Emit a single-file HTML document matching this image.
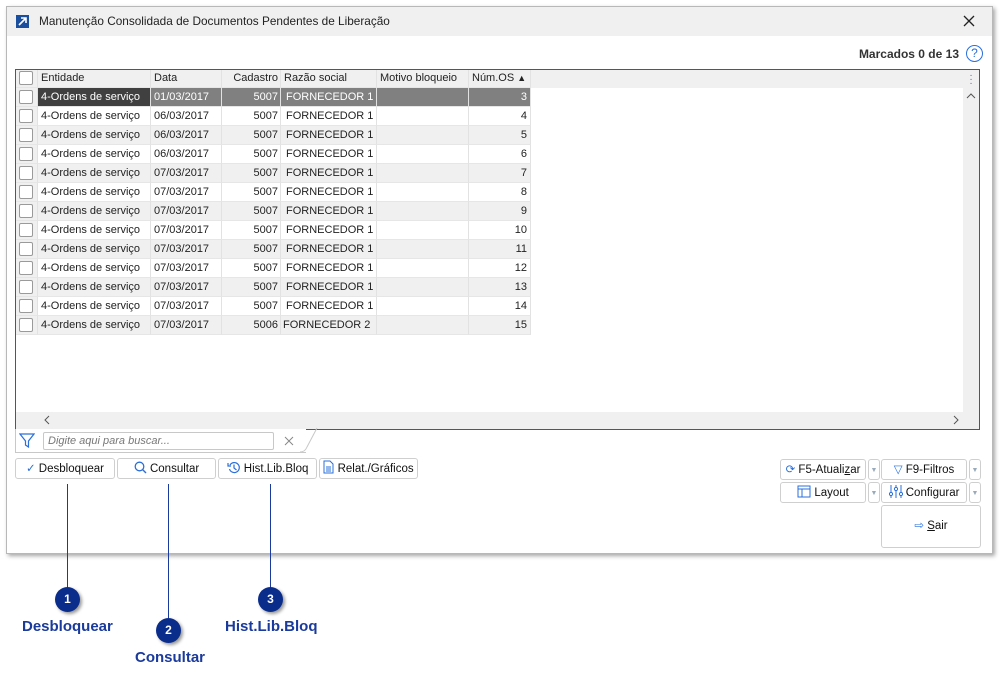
<!DOCTYPE html>
<html><head><meta charset="utf-8"><style>
*{box-sizing:border-box;margin:0;padding:0}
body{width:1001px;height:685px;background:#fff;font-family:"Liberation Sans",sans-serif;font-size:11px;color:#222;position:relative;overflow:hidden}
.abs{position:absolute}
.win{left:6px;top:6px;width:987px;height:548px;border:1px solid #b8b8b8;background:#fff;box-shadow:2px 2px 4px rgba(0,0,0,.35)}
.title{left:0;top:0;width:985px;height:29px;background:#f0f0f0}
.grid{left:8px;top:62px;width:965px;height:361px;border:1px solid #2a5ca8;background:#fff}
.row{position:absolute;left:0;height:19px;width:516px}
.c{position:absolute;top:0;height:19px;line-height:19px;white-space:nowrap;overflow:hidden;border-right:1px solid #e2e2e2;border-bottom:1px solid #e6e6e6;padding:0 3px}
.cb{position:absolute;left:3px;top:2px;width:14px;height:14px;border:1px solid #9a9a9a;background:#fff;border-radius:2px}
.btn{position:absolute;height:21px;border:1px solid #cfcfcf;border-radius:3px;background:#fff;font-size:11.5px;line-height:20px;text-align:center;color:#111}
.dd{position:absolute;width:12px;height:21px;border:1px solid #cfcfcf;border-radius:3px;background:#fff;color:#9ab;font-size:7px;text-align:center;line-height:21px}
.bub{position:absolute;width:25px;height:25px;border-radius:50%;background:#0a2d8c;color:#fff;font-weight:bold;font-size:12px;text-align:center;line-height:25px;box-shadow:2px 2px 3px rgba(0,0,0,.4)}
.lbl{position:absolute;color:#1a3a9c;font-weight:bold;font-size:15px;font-family:"Liberation Sans",sans-serif}
.vl{position:absolute;width:1px;background:#1a3a9c}
.g{background:#f0f0f0}.s{background:#808080}
.r{text-align:right}
</style></head><body>
<div class="abs win">
 <div class="abs title">
  <div class="abs" style="left:9px;top:8px;width:13px;height:13px;background:#1a4fa0"><svg width="13" height="13"><path d="M3 10L10 3M5 3h5v5" stroke="#fff" stroke-width="1.6" fill="none"/></svg></div>
  <div class="abs" style="left:32px;top:7px;font-size:11.8px;color:#222">Manutenção Consolidada de Documentos Pendentes de Liberação</div>
  <svg class="abs" style="left:956px;top:8px" width="12" height="12"><path d="M1 1L11 11M11 1L1 11" stroke="#222" stroke-width="1.3"/></svg>
 </div>
 <div class="abs" style="right:33px;top:40px;font-weight:bold;font-size:12px;color:#333">Marcados 0 de 13</div>
 <div class="abs" style="left:959px;top:38px;width:17px;height:17px;border:1.5px solid #2a6fdb;border-radius:50%;color:#2a6fdb;font-size:12px;text-align:center;line-height:14px">?</div>
 <div class="abs grid">
  <div class="abs" style="left:0;top:0;width:947px;height:18px;background:#f0f0f0"></div>
  <div class="abs" style="left:0;top:0;width:963px;height:342px">
   <div class="row" style="top:0;height:18px">
    <div class="c" style="left:0;width:22px;height:18px;background:#f0f0f0"><div class="cb" style="top:1px"></div></div>
    <div class="c" style="left:22px;width:113px;line-height:17px;height:18px">Entidade</div>
    <div class="c" style="left:135px;width:71px;line-height:17px;height:18px">Data</div>
    <div class="c" style="left:206px;width:59px;line-height:17px;height:18px;text-align:right;padding-right:2px">Cadastro</div>
    <div class="c" style="left:265px;width:96px;line-height:17px;height:18px">Razão social</div>
    <div class="c" style="left:361px;width:92px;line-height:17px;height:18px">Motivo bloqueio</div>
    <div class="c" style="left:453px;width:62px;line-height:17px;height:18px">Núm.OS <span style="font-size:9px">&#9650;</span></div>
   </div>
   <div class="row" style="top:18px;color:#fff"><div class="c g" style="left:0;width:22px"><div class="cb"></div></div><div class="c" style="left:22px;width:113px;background:#404040">4-Ordens de serviço</div><div class="c s" style="left:135px;width:71px">01/03/2017</div><div class="c s r" style="left:206px;width:59px;padding-right:2px">5007</div><div class="c s" style="left:265px;width:96px;padding-left:5px">FORNECEDOR 1</div><div class="c s" style="left:361px;width:92px"></div><div class="c s r" style="left:453px;width:62px">3</div></div>
   <div class="row" style="top:37px"><div class="c g" style="left:0;width:22px"><div class="cb"></div></div><div class="c" style="left:22px;width:113px">4-Ordens de serviço</div><div class="c" style="left:135px;width:71px">06/03/2017</div><div class="c r" style="left:206px;width:59px;padding-right:2px">5007</div><div class="c" style="left:265px;width:96px;padding-left:5px">FORNECEDOR 1</div><div class="c" style="left:361px;width:92px"></div><div class="c r" style="left:453px;width:62px">4</div></div>
   <div class="row" style="top:56px"><div class="c g" style="left:0;width:22px"><div class="cb"></div></div><div class="c g" style="left:22px;width:113px">4-Ordens de serviço</div><div class="c g" style="left:135px;width:71px">06/03/2017</div><div class="c g r" style="left:206px;width:59px;padding-right:2px">5007</div><div class="c g" style="left:265px;width:96px;padding-left:5px">FORNECEDOR 1</div><div class="c g" style="left:361px;width:92px"></div><div class="c g r" style="left:453px;width:62px">5</div></div>
   <div class="row" style="top:75px"><div class="c g" style="left:0;width:22px"><div class="cb"></div></div><div class="c" style="left:22px;width:113px">4-Ordens de serviço</div><div class="c" style="left:135px;width:71px">06/03/2017</div><div class="c r" style="left:206px;width:59px;padding-right:2px">5007</div><div class="c" style="left:265px;width:96px;padding-left:5px">FORNECEDOR 1</div><div class="c" style="left:361px;width:92px"></div><div class="c r" style="left:453px;width:62px">6</div></div>
   <div class="row" style="top:94px"><div class="c g" style="left:0;width:22px"><div class="cb"></div></div><div class="c g" style="left:22px;width:113px">4-Ordens de serviço</div><div class="c g" style="left:135px;width:71px">07/03/2017</div><div class="c g r" style="left:206px;width:59px;padding-right:2px">5007</div><div class="c g" style="left:265px;width:96px;padding-left:5px">FORNECEDOR 1</div><div class="c g" style="left:361px;width:92px"></div><div class="c g r" style="left:453px;width:62px">7</div></div>
   <div class="row" style="top:113px"><div class="c g" style="left:0;width:22px"><div class="cb"></div></div><div class="c" style="left:22px;width:113px">4-Ordens de serviço</div><div class="c" style="left:135px;width:71px">07/03/2017</div><div class="c r" style="left:206px;width:59px;padding-right:2px">5007</div><div class="c" style="left:265px;width:96px;padding-left:5px">FORNECEDOR 1</div><div class="c" style="left:361px;width:92px"></div><div class="c r" style="left:453px;width:62px">8</div></div>
   <div class="row" style="top:132px"><div class="c g" style="left:0;width:22px"><div class="cb"></div></div><div class="c g" style="left:22px;width:113px">4-Ordens de serviço</div><div class="c g" style="left:135px;width:71px">07/03/2017</div><div class="c g r" style="left:206px;width:59px;padding-right:2px">5007</div><div class="c g" style="left:265px;width:96px;padding-left:5px">FORNECEDOR 1</div><div class="c g" style="left:361px;width:92px"></div><div class="c g r" style="left:453px;width:62px">9</div></div>
   <div class="row" style="top:151px"><div class="c g" style="left:0;width:22px"><div class="cb"></div></div><div class="c" style="left:22px;width:113px">4-Ordens de serviço</div><div class="c" style="left:135px;width:71px">07/03/2017</div><div class="c r" style="left:206px;width:59px;padding-right:2px">5007</div><div class="c" style="left:265px;width:96px;padding-left:5px">FORNECEDOR 1</div><div class="c" style="left:361px;width:92px"></div><div class="c r" style="left:453px;width:62px">10</div></div>
   <div class="row" style="top:170px"><div class="c g" style="left:0;width:22px"><div class="cb"></div></div><div class="c g" style="left:22px;width:113px">4-Ordens de serviço</div><div class="c g" style="left:135px;width:71px">07/03/2017</div><div class="c g r" style="left:206px;width:59px;padding-right:2px">5007</div><div class="c g" style="left:265px;width:96px;padding-left:5px">FORNECEDOR 1</div><div class="c g" style="left:361px;width:92px"></div><div class="c g r" style="left:453px;width:62px">11</div></div>
   <div class="row" style="top:189px"><div class="c g" style="left:0;width:22px"><div class="cb"></div></div><div class="c" style="left:22px;width:113px">4-Ordens de serviço</div><div class="c" style="left:135px;width:71px">07/03/2017</div><div class="c r" style="left:206px;width:59px;padding-right:2px">5007</div><div class="c" style="left:265px;width:96px;padding-left:5px">FORNECEDOR 1</div><div class="c" style="left:361px;width:92px"></div><div class="c r" style="left:453px;width:62px">12</div></div>
   <div class="row" style="top:208px"><div class="c g" style="left:0;width:22px"><div class="cb"></div></div><div class="c g" style="left:22px;width:113px">4-Ordens de serviço</div><div class="c g" style="left:135px;width:71px">07/03/2017</div><div class="c g r" style="left:206px;width:59px;padding-right:2px">5007</div><div class="c g" style="left:265px;width:96px;padding-left:5px">FORNECEDOR 1</div><div class="c g" style="left:361px;width:92px"></div><div class="c g r" style="left:453px;width:62px">13</div></div>
   <div class="row" style="top:227px"><div class="c g" style="left:0;width:22px"><div class="cb"></div></div><div class="c" style="left:22px;width:113px">4-Ordens de serviço</div><div class="c" style="left:135px;width:71px">07/03/2017</div><div class="c r" style="left:206px;width:59px;padding-right:2px">5007</div><div class="c" style="left:265px;width:96px;padding-left:5px">FORNECEDOR 1</div><div class="c" style="left:361px;width:92px"></div><div class="c r" style="left:453px;width:62px">14</div></div>
   <div class="row" style="top:246px"><div class="c g" style="left:0;width:22px"><div class="cb"></div></div><div class="c g" style="left:22px;width:113px">4-Ordens de serviço</div><div class="c g" style="left:135px;width:71px">07/03/2017</div><div class="c g r" style="left:206px;width:59px;padding-right:2px">5006</div><div class="c g" style="left:265px;width:96px;padding-left:2px">FORNECEDOR 2</div><div class="c g" style="left:361px;width:92px"></div><div class="c g r" style="left:453px;width:62px">15</div></div>
  </div>
  <div class="abs" style="left:947px;top:0;width:16px;height:342px;background:#f0f0f0;color:#2a6fdb;text-align:center;font-size:10px;line-height:4px;padding-top:4px">·<br>·<br>·</div>
  <svg class="abs" style="left:950px;top:22px" width="10" height="8"><path d="M1 6L5 2L9 6" stroke="#555" fill="none"/></svg>
  <svg class="abs" style="left:950px;top:345px" width="10" height="8"><path d="M1 2L5 6L9 2" stroke="#555" fill="none"/></svg>
  <div class="abs" style="left:0;top:342px;width:963px;height:17px;background:#f0f0f0"></div>
  <svg class="abs" style="left:27px;top:345px" width="8" height="10"><path d="M6 1L2 5L6 9" stroke="#555" fill="none"/></svg>
  <svg class="abs" style="left:936px;top:345px" width="8" height="10"><path d="M2 1L6 5L2 9" stroke="#555" fill="none"/></svg>
 </div>
 <div class="abs" style="left:8px;top:422px;width:291px;height:24px;border:1px solid #c8c8c8;border-top:none;border-right:none;background:#fff"></div>
 <svg class="abs" style="left:12px;top:426px" width="16" height="15"><path d="M1 1H15L9.5 8V14L6.5 12V8Z" stroke="#2a6fdb" fill="none" stroke-width="1.2"/></svg>
 <div class="abs" style="left:36px;top:425px;width:231px;height:18px;border:1px solid #c8c8c8;border-radius:2px;font-style:italic;color:#777;font-size:11px;line-height:16px;padding-left:4px">Digite aqui para buscar...</div>
 <svg class="abs" style="left:277px;top:429px" width="10" height="10"><path d="M1 1L9 9M9 1L1 9" stroke="#888"/></svg>
 <svg class="abs" style="left:292px;top:420px" width="20" height="27"><path d="M18 1L8 20Q6 25 1 25" stroke="#c8c8c8" fill="none"/></svg>

 <div class="btn" style="left:8px;top:451px;width:100px"><span style="color:#2a6fdb">&#10003;</span> Desbloquear</div>
 <div class="btn" style="left:110px;top:451px;width:99px"><svg width="13" height="13" style="vertical-align:-2px"><circle cx="5.5" cy="5.5" r="4.3" stroke="#2a6fdb" fill="none" stroke-width="1.3"/><path d="M8.5 8.5L12 12" stroke="#2a6fdb" stroke-width="1.4"/></svg> Consultar</div>
 <div class="btn" style="left:211px;top:451px;width:99px"><svg width="14" height="13" style="vertical-align:-2px"><path d="M3 4A5 5 0 1 1 2.5 8M1 2V5H4M7 3.5V7L9.5 9" stroke="#2a6fdb" fill="none" stroke-width="1.2"/></svg> Hist.Lib.Bloq</div>
 <div class="btn" style="left:312px;top:451px;width:99px"><svg width="11" height="14" style="vertical-align:-2px"><path d="M1 1H7L10 4V13H1Z M3 7H8M3 9H8M3 11H8" stroke="#2a6fdb" fill="none"/></svg> Relat./Gráficos</div>

 <div class="btn" style="left:773px;top:452px;width:86px"><span style="color:#2a6fdb">&#10227;</span> F5-Atuali<u>z</u>ar</div>
 <div class="dd" style="left:861px;top:452px">&#9660;</div>
 <div class="btn" style="left:874px;top:452px;width:86px"><span style="color:#2a6fdb">&#9661;</span> F9-Filtros</div>
 <div class="dd" style="left:962px;top:452px">&#9660;</div>
 <div class="btn" style="left:773px;top:475px;width:86px"><svg width="14" height="13" style="vertical-align:-2px"><path d="M1 1H13V12H1Z M1 4H13M5 4V12" stroke="#2a6fdb" fill="none"/></svg> Layout</div>
 <div class="dd" style="left:861px;top:475px">&#9660;</div>
 <div class="btn" style="left:874px;top:475px;width:86px"><svg width="14" height="13" style="vertical-align:-2px"><path d="M2 0V13M7 0V13M12 0V13" stroke="#2a6fdb"/><circle cx="2" cy="9" r="1.6" fill="#fff" stroke="#2a6fdb"/><circle cx="7" cy="4" r="1.6" fill="#fff" stroke="#2a6fdb"/><circle cx="12" cy="9" r="1.6" fill="#fff" stroke="#2a6fdb"/></svg> Configurar</div>
 <div class="dd" style="left:962px;top:475px">&#9660;</div>
 <div class="btn" style="left:874px;top:498px;width:100px;height:43px;line-height:41px"><span style="color:#2a6fdb">&#8680;</span> <u>S</u>air</div>
</div>

<div class="vl" style="left:67px;top:484px;height:104px"></div>
<div class="vl" style="left:168px;top:484px;height:134px"></div>
<div class="vl" style="left:270px;top:484px;height:104px"></div>
<div class="bub" style="left:55px;top:587px">1</div>
<div class="bub" style="left:156px;top:618px">2</div>
<div class="bub" style="left:258px;top:587px">3</div>
<div class="lbl" style="left:22px;top:618px">Desbloquear</div>
<div class="lbl" style="left:135px;top:649px">Consultar</div>
<div class="lbl" style="left:225px;top:618px">Hist.Lib.Bloq</div>
</body></html>
